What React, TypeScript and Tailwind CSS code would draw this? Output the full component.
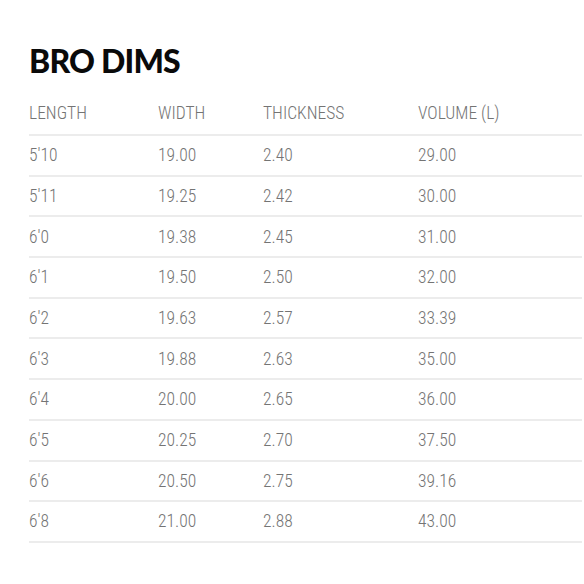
const rows = [
  ["5'10", "19.00", "2.40", "29.00"],
  ["5'11", "19.25", "2.42", "30.00"],
  ["6'0", "19.38", "2.45", "31.00"],
  ["6'1", "19.50", "2.50", "32.00"],
  ["6'2", "19.63", "2.57", "33.39"],
  ["6'3", "19.88", "2.63", "35.00"],
  ["6'4", "20.00", "2.65", "36.00"],
  ["6'5", "20.25", "2.70", "37.50"],
  ["6'6", "20.50", "2.75", "39.16"],
  ["6'8", "21.00", "2.88", "43.00"],
];

export default function App() {
  return (
    <div className="w-[584px] h-[584px] bg-white pl-[29px] pr-[2px] pt-[43px]">
      <h1 className="font-['Lato','Open_Sans',sans-serif] font-black text-[32px] leading-[36px] text-[#0a0a0a] tracking-[-0.8px]">
        BRO DIMS
      </h1>
      <table
        className="mt-[14px] w-full border-collapse font-['Roboto',sans-serif] font-light text-[17.5px] text-[#747474]"
        style={{ fontStretch: "condensed" }}
      >
        <thead>
          <tr className="border-b-2 border-[#ececec] h-[42px]">
            <th className="w-[129px] text-left font-light">LENGTH</th>
            <th className="w-[105px] text-left font-light">WIDTH</th>
            <th className="w-[155px] text-left font-light">THICKNESS</th>
            <th className="text-left font-light">VOLUME (L)</th>
          </tr>
        </thead>
        <tbody>
          {rows.map((r) => (
            <tr key={r[0]} className="border-b-2 border-[#ececec] h-[40.7px]">
              {r.map((c, i) => (
                <td key={i} className="text-left">{c}</td>
              ))}
            </tr>
          ))}
        </tbody>
      </table>
    </div>
  );
}
